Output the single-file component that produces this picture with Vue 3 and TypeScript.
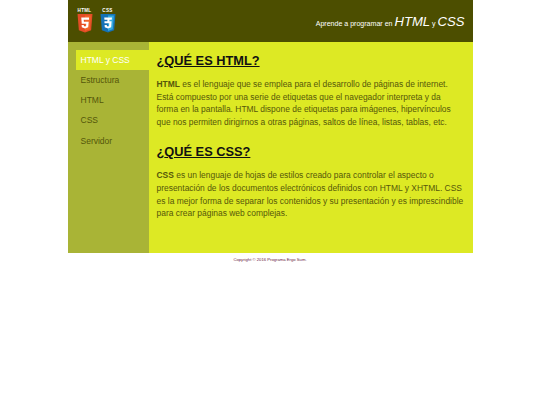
<script setup lang="ts">
const items: string[] = ['HTML y CSS', 'Estructura', 'HTML', 'CSS', 'Servidor']
</script>

<template>
  <div class="page">
    <header class="top">
      <div class="logos">
        <div class="logo">
          <span class="cap">HTML</span>
          <svg width="16" height="18.500" viewBox="0 0 30 36" preserveAspectRatio="none">
            <path d="M1 0H29L26.500 31.500L15 36L3.500 31.500Z" fill="#e44d26" />
            <path d="M15 3V33L24 29.500L26 3Z" fill="#f16529" />
            <path d="M8 7H22.500V11H12.500L13 15H22L21 26L15 28L9 26L8.600 21.500H12.800L13 23.500L15 24.200L17 23.500L17.300 19H8.900Z" fill="#fff" />
          </svg>
        </div>
        <div class="logo">
          <span class="cap">CSS</span>
          <svg width="16" height="18.500" viewBox="0 0 30 36" preserveAspectRatio="none">
            <path d="M1 0H29L26.500 31.500L15 36L3.500 31.500Z" fill="#1572b6" />
            <path d="M15 3V33L24 29.500L26 3Z" fill="#33a9dc" />
            <path d="M8 7H22.500L22 11H14L13.700 14H21.800L21 26L15 28L9 26L8.600 21.500H12.800L13 23.500L15 24.200L17 23.500L17.300 18H8.500L8.300 14H17.500L17.800 11H8.300Z" fill="#fff" />
          </svg>
        </div>
      </div>
      <p class="tagline">Aprende a programar en <em class="big">HTML</em> <span>y</span> <em class="big">CSS</em></p>
    </header>
    <div class="body">
      <nav class="side">
        <a v-for="(item, i) in items" :key="item" class="link" :class="{ active: i === 0 }">{{ item }}</a>
      </nav>
      <main class="content">
        <h1>¿<u>QUÉ ES HTML?</u></h1>
        <p><b>HTML</b> es el lenguaje que se emplea para el desarrollo de páginas de internet.<br>Está compuesto por una serie de etiquetas que el navegador interpreta y da<br>forma en la pantalla. HTML dispone de etiquetas para imágenes, hipervínculos<br>que nos permiten dirigirnos a otras páginas, saltos de línea, listas, tablas, etc.</p>
        <h1 class="second">¿<u>QUÉ ES CSS?</u></h1>
        <p><b>CSS</b> es un lenguaje de hojas de estilos creado para controlar el aspecto o<br>presentación de los documentos electrónicos definidos con HTML y XHTML. CSS<br>es la mejor forma de separar los contenidos y su presentación y es imprescindible<br>para crear páginas web complejas.</p>
      </main>
    </div>
    <footer class="foot">Copyright © 2016 Programa Ergo Sum.</footer>
  </div>
</template>

<style>
html, body { margin: 0; background: #fff; }
</style>

<style scoped>
.page {
  width: 405px;
  margin: 0 auto;
  font-family: "Liberation Sans", Arial, sans-serif;
}
.top {
  height: 42px;
  background: #4c4e00;
  display: flex;
  justify-content: space-between;
  align-items: flex-start;
  padding: 0 8px 0 9px;
  box-sizing: border-box;
}
.logos { display: flex; gap: 7px; padding-top: 8px; }
.logo { display: flex; flex-direction: column; align-items: center; width: 16px; }
.cap { font-size: 4.600px; line-height: 6px; font-weight: 700; color: #fff; letter-spacing: 0.3px; }
.logo svg { display: block; }
.tagline { margin: 13px 0 0; font-size: 7.050px; line-height: 17px; color: #fff; }
.tagline em { font-style: italic; }
.big { font-size: 13.100px; }
.body { display: flex; height: 211px; }
.side {
  width: 81px;
  flex: none;
  background: #a9b436;
  padding-top: 7.500px;
  padding-left: 8px;
  box-sizing: border-box;
  display: flex;
  flex-direction: column;
}
.link {
  height: 20.250px;
  line-height: 20px;
  padding-left: 5px;
  font-size: 8.500px;
  color: #54560a;
}
.link.active { background: #dde924; color: #fff; }
.content {
  flex: 1;
  background: #dde924;
  padding: 10px 8px 0 8px;
  color: #56580a;
}
h1 {
  margin: 0;
  font-size: 12.800px;
  line-height: 17px;
  color: #111;
  font-weight: 700;
}
.second { margin-top: 15px; }
p { margin: 0; }
.content p {
  margin-top: 9px;
  font-size: 8.450px;
  line-height: 12.600px;
  white-space: nowrap;
}
.foot {
  margin-top: 4px;
  text-align: center;
  font-size: 4.200px;
  line-height: 6px;
  color: #6a2040;
}
</style>
